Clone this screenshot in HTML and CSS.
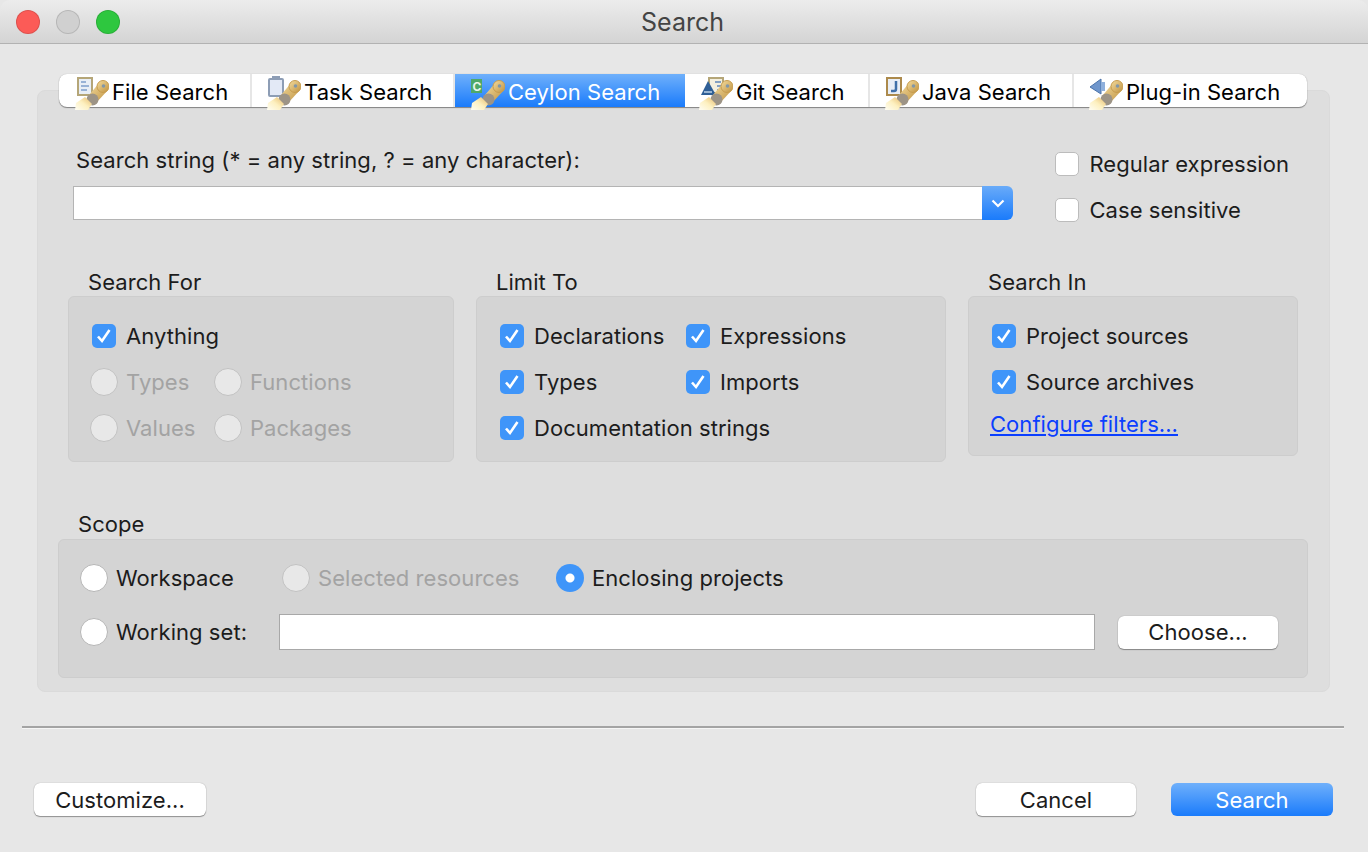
FILE: index.html
```html
<!DOCTYPE html>
<html lang="en">

<head>
    <meta charset="UTF-8">
    <title>Search</title>
    <link rel="stylesheet" href="styles.css">
</head>

<body>
    <svg class="defs" width="0" height="0">
        <defs>
            <linearGradient id="head" x1="0" y1="0" x2="1" y2="1">
                <stop offset="0" stop-color="#f3dca0" />
                <stop offset="1" stop-color="#c0923f" />
            </linearGradient>
            <linearGradient id="glow" x1="1" y1="0" x2="0" y2="1">
                <stop offset="0" stop-color="#e6b968" />
                <stop offset="0.5" stop-color="#fdf0c0" />
                <stop offset="1" stop-color="#fffef4" />
            </linearGradient>
            <g id="torch">
                <path d="M14 22 L25 9 L33 17 L21 30 Z" fill="url(#head)" />
                <circle cx="28" cy="13.5" r="6" fill="url(#head)" stroke="#c79c4e" />
                <circle cx="28.5" cy="13" r="1.8" fill="#8297a8" />
                <circle cx="17.5" cy="26.5" r="6" fill="#9d9486" />
                <path d="M0 37 L1 30 L10 24 L17 31 L13 37 Z" fill="url(#glow)" />
            </g>
        </defs>
    </svg>

    <div class="window">
        <div class="titlebar">
            <div class="lights">
                <span class="light red"></span>
                <span class="light grey"></span>
                <span class="light green"></span>
            </div>
            <div class="title">Search</div>
        </div>

        <div class="tabs">
            <div class="tab t1">
                <svg class="tabicon" viewBox="0 0 34 37">
                    <rect x="3" y="5" width="14" height="17" fill="#e8eef6" stroke="#b5a678" stroke-width="2" />
                    <path d="M6 9h5M6 13h8M6 17h6" stroke="#7d9fcb" stroke-width="1.5" />
                    <use href="#torch" />
                </svg>
                File Search
            </div>
            <div class="tab t2">
                <svg class="tabicon" viewBox="0 0 34 37">
                    <rect x="2" y="6" width="14" height="17" rx="1" fill="#e3e9f6" stroke="#8d9db5" stroke-width="2" />
                    <rect x="5" y="3" width="8" height="4" fill="#8d9db5" />
                    <use href="#torch" />
                </svg>
                Task Search
            </div>
            <div class="tab t3 active">
                <svg class="tabicon" viewBox="0 0 34 37">
                    <rect x="0" y="6" width="11" height="14" fill="#4fa868" />
                    <text class="ceylon" x="1.5" y="17.5">C</text>
                    <use href="#torch" />
                </svg>
                Ceylon Search
            </div>
            <div class="tab t4">
                <svg class="tabicon" viewBox="0 0 34 37">
                    <rect x="10" y="5" width="14" height="15" fill="#f3efdf" stroke="#b5a678" stroke-width="2" />
                    <path d="M16 9h6M18 13h4M18 17h4" stroke="#5f86ba" stroke-width="1.5" />
                    <path d="M2 22 L9 8 L17 22 Z" fill="#2f5f96" />
                    <path d="M5 19h8" stroke="#bcd0e6" stroke-width="1.5" />
                    <use href="#torch" />
                </svg>
                Git Search
            </div>
            <div class="tab t5">
                <svg class="tabicon" viewBox="0 0 34 37">
                    <rect x="2" y="5" width="14" height="17" fill="#e8eef6" stroke="#ac8a4c" stroke-width="2" />
                    <path d="M11 8v8q0 2-2 2h-3" fill="none" stroke="#3f6fa8" stroke-width="2.5" />
                    <use href="#torch" />
                </svg>
                Java Search
            </div>
            <div class="tab t6">
                <svg class="tabicon" viewBox="0 0 34 37">
                    <path d="M1 14 L12 6 V21 Z" fill="#6f96cc" stroke="#4c74ab" />
                    <rect x="12" y="9" width="4" height="9" fill="#8fb0dc" />
                    <use href="#torch" />
                </svg>
                Plug-in Search
            </div>
        </div>

        <div class="panel">
            <div class="searchrow">
                <div class="searchmain">
                    <div class="label">Search string (* = any string, ? = any character):</div>
                    <div class="combo">
                        <div class="combofield"></div>
                        <div class="combobtn">
                            <svg viewBox="0 0 14 9" width="14" height="9">
                                <path d="M1.5 1.5 L7 7 L12.5 1.5" fill="none" stroke="#fff" stroke-width="2.2" />
                            </svg>
                        </div>
                    </div>
                </div>
                <div class="searchopts">
                    <div class="opt"><span class="check"></span>Regular expression</div>
                    <div class="opt"><span class="check"></span>Case sensitive</div>
                </div>
            </div>

            <div class="groups">
                <div class="group g-for">
                    <div class="grouptitle">Search For</div>
                    <div class="groupbox">
                        <div class="opt"><span class="check on"></span>Anything</div>
                        <div class="cols c-for">
                            <div class="opt off"><span class="radio"></span>Types</div>
                            <div class="opt off"><span class="radio"></span>Functions</div>
                            <div class="opt off"><span class="radio"></span>Values</div>
                            <div class="opt off"><span class="radio"></span>Packages</div>
                        </div>
                    </div>
                </div>

                <div class="group g-limit">
                    <div class="grouptitle">Limit To</div>
                    <div class="groupbox">
                        <div class="cols c-limit">
                            <div class="opt"><span class="check on"></span>Declarations</div>
                            <div class="opt"><span class="check on"></span>Expressions</div>
                            <div class="opt"><span class="check on"></span>Types</div>
                            <div class="opt"><span class="check on"></span>Imports</div>
                        </div>
                        <div class="opt"><span class="check on"></span>Documentation strings</div>
                    </div>
                </div>

                <div class="group g-in">
                    <div class="grouptitle">Search In</div>
                    <div class="groupbox">
                        <div class="opt"><span class="check on"></span>Project sources</div>
                        <div class="opt"><span class="check on"></span>Source archives</div>
                        <a class="link">Configure filters...</a>
                    </div>
                </div>
            </div>

            <div class="scope">
                <div class="grouptitle">Scope</div>
                <div class="scopebox">
                    <div class="scoperow">
                        <div class="opt s1"><span class="radio live"></span>Workspace</div>
                        <div class="opt off s2"><span class="radio"></span>Selected resources</div>
                        <div class="opt"><span class="radio sel"></span>Enclosing projects</div>
                    </div>
                    <div class="scoperow r2">
                        <div class="opt s3"><span class="radio live"></span>Working set:</div>
                        <div class="setfield"></div>
                        <div class="btn choose">Choose...</div>
                    </div>
                </div>
            </div>
        </div>

        <div class="sep"></div>

        <div class="footer">
            <div class="btn customize">Customize...</div>
            <div class="spacer"></div>
            <div class="btn cancel">Cancel</div>
            <div class="btn primary">Search</div>
        </div>
    </div>
</body>

</html>
```

FILE: styles.css
```css
* {
    box-sizing: border-box;
}

body {
    margin: 0;
    background-color: #e6e6e6;
    font-family: "Inter", "Liberation Sans", sans-serif;
    font-size: 22px;
    letter-spacing: 0.05px;
    color: #1c1c1c;
    overflow: hidden;
}

.defs {
    display: block;
}

.window {
    width: 1368px;
    height: 852px;
    background-color: #e7e7e7;
}

/* title bar */
.titlebar {
    height: 44px;
    display: flex;
    align-items: center;
    justify-content: center;
    padding-top: 1px;
    padding-right: 3px;
    background: linear-gradient(#ececec, #d4d4d4);
    border-bottom: 1px solid #b2b2b2;
    border-radius: 10px 10px 0 0;
    position: relative;
}

.lights {
    position: absolute;
    left: 16px;
    top: 10px;
    display: flex;
    gap: 16px;
}

.light {
    width: 24px;
    height: 24px;
    border-radius: 50%;
    border: 1px solid rgba(0, 0, 0, 0.12);
}

.red {
    background-color: #fc5b57;
}

.grey {
    background-color: #d0d0d0;
}

.green {
    background-color: #2ec73f;
}

.title {
    font-size: 25px;
    letter-spacing: 0;
    color: #444;
}

/* tabs */
.tabs {
    display: flex;
    height: 33px;
    margin: 30px 61px -17px 59px;
    position: relative;
    z-index: 1;
    background-color: #fff;
    border-radius: 8px;
    box-shadow: 0 1px 1px rgba(0, 0, 0, 0.4), 0 0 1px rgba(0, 0, 0, 0.25);
    color: #000;
}

.tab {
    display: flex;
    align-items: center;
    white-space: nowrap;
    border-right: 2px solid #e6e6e6;
    padding-left: 16px;
    padding-top: 2px;
}

.tabicon {
    width: 34px;
    height: 37px;
    flex: none;
    margin-right: 3px;
}

.t1 {
    width: 193px;
}

.t2 {
    width: 203px;
    padding-left: 15px;
}

.t3 {
    width: 230px;
}

.t4 {
    width: 185px;
    padding-left: 14px;
}

.t5 {
    width: 204px;
    padding-left: 15px;
}

.t6 {
    width: 233px;
    padding-left: 15px;
    border-right: none;
}

.active {
    background: linear-gradient(#6fb0fb, #1a7bfb);
    color: #fff;
    border-right: none;
}

.ceylon {
    font-size: 12px;
    font-weight: bold;
    fill: #eaf6ea;
}

/* main panel */
.panel {
    margin: 0 38px 0 37px;
    height: 602px;
    background-color: #dedede;
    border: 1px solid #dadada;
    border-radius: 8px;
    padding: 56px 21px 0 20px;
}

.searchrow {
    display: flex;
    justify-content: space-between;
}

.searchmain {
    width: 940px;
    margin-left: 15px;
}

.label {
    height: 27px;
    line-height: 27px;
    margin-left: 3px;
}

.combo {
    display: flex;
    height: 34px;
    margin-top: 12px;
}

.combofield {
    flex: 1;
    background-color: #fff;
    border: 1px solid #b4b4b4;
    border-right: none;
}

.combobtn {
    width: 31px;
    display: flex;
    align-items: center;
    justify-content: center;
    background: linear-gradient(#69abf9, #1a7bfb);
    border-radius: 0 6px 6px 0;
}

.searchopts {
    display: flex;
    flex-direction: column;
    gap: 18px;
    margin-top: 3px;
    margin-right: 19px;
}

.searchopts .check {
    margin-right: 10px;
}

.opt {
    display: flex;
    align-items: center;
    height: 28px;
    white-space: nowrap;
}

.check {
    width: 24px;
    height: 24px;
    margin-right: 10px;
    background-color: #fff;
    border: 1px solid #bcbcbc;
    border-radius: 5px;
    flex: none;
}

.check.on {
    border: none;
    background: #3f95f9 url("data:image/svg+xml,%3Csvg xmlns='http://www.w3.org/2000/svg' viewBox='0 0 24 24'%3E%3Cpath d='M6 12.5l4 4.5 7.5-11' fill='none' stroke='%23fff' stroke-width='2.6'/%3E%3C/svg%3E");
}

.radio {
    width: 28px;
    height: 28px;
    margin-right: 8px;
    margin-left: -2px;
    background-color: #e8e8e8;
    border: 1px solid #c2c2c2;
    border-radius: 50%;
    flex: none;
}

.radio.live {
    background-color: #fff;
    border-color: #b6b6b6;
}

.radio.sel {
    background: radial-gradient(circle, #fff 0, #fff 4px, #3f95f9 5px);
    border: none;
}

.off {
    color: #a3a3a3;
}

/* three groups */
.groups {
    display: flex;
    margin-top: 45px;
    margin-left: 10px;
}

.grouptitle {
    height: 27px;
    line-height: 27px;
    margin-left: 20px;
}

.groupbox {
    background-color: #d4d4d4;
    border: 1px solid #cdcdcd;
    border-radius: 6px;
    padding: 25px 22px 0 23px;
    display: flex;
    flex-direction: column;
    gap: 18px;
}

.g-for {
    width: 386px;
}

.g-for .groupbox,
.g-limit .groupbox {
    height: 166px;
}

.g-limit {
    width: 470px;
    margin-left: 22px;
}

.g-in {
    width: 330px;
    margin-left: 22px;
}

.g-in .groupbox {
    height: 160px;
}

.cols {
    display: grid;
    gap: 18px 0;
}

.c-for {
    grid-template-columns: 124px auto;
}

.c-limit {
    grid-template-columns: 186px auto;
}

.link {
    color: #0b3fff;
    text-decoration: underline;
    margin-top: -3px;
    margin-left: -2px;
    height: 27px;
    line-height: 27px;
}

/* scope */
.scope {
    margin-top: 49px;
}

.scopebox {
    height: 139px;
    margin-top: 1px;
    background-color: #d4d4d4;
    border: 1px solid #cdcdcd;
    border-radius: 6px;
    padding: 24px 28px 0 23px;
}

.scoperow {
    display: flex;
    align-items: center;
}

.r2 {
    margin-top: 22px;
}

.s1 {
    width: 202px;
}

.s2 {
    width: 274px;
}

.s3 {
    width: 197px;
}

.setfield {
    width: 816px;
    height: 36px;
    background-color: #fff;
    border: 1px solid #a8a8a8;
}

.btn {
    height: 33px;
    display: flex;
    align-items: center;
    justify-content: center;
    background-color: #fff;
    border-radius: 6px;
    box-shadow: 0 1px 1px rgba(0, 0, 0, 0.35), 0 0 1px rgba(0, 0, 0, 0.35);
}

.choose {
    width: 160px;
    margin-left: 23px;
}

/* bottom */
.sep {
    height: 3px;
    margin: 34px 24px 0 22px;
    background-color: #a4a4a4;
    border-bottom: 1px solid #f6f6f6;
}

.footer {
    display: flex;
    margin: 54px 35px 0 34px;
}

.spacer {
    flex: 1;
}

.customize {
    width: 172px;
}

.cancel {
    width: 160px;
    margin-right: 35px;
}

.primary {
    width: 162px;
    color: #fff;
    background: linear-gradient(#6fb0fb, #1a7bfb);
    box-shadow: none;
}
```
